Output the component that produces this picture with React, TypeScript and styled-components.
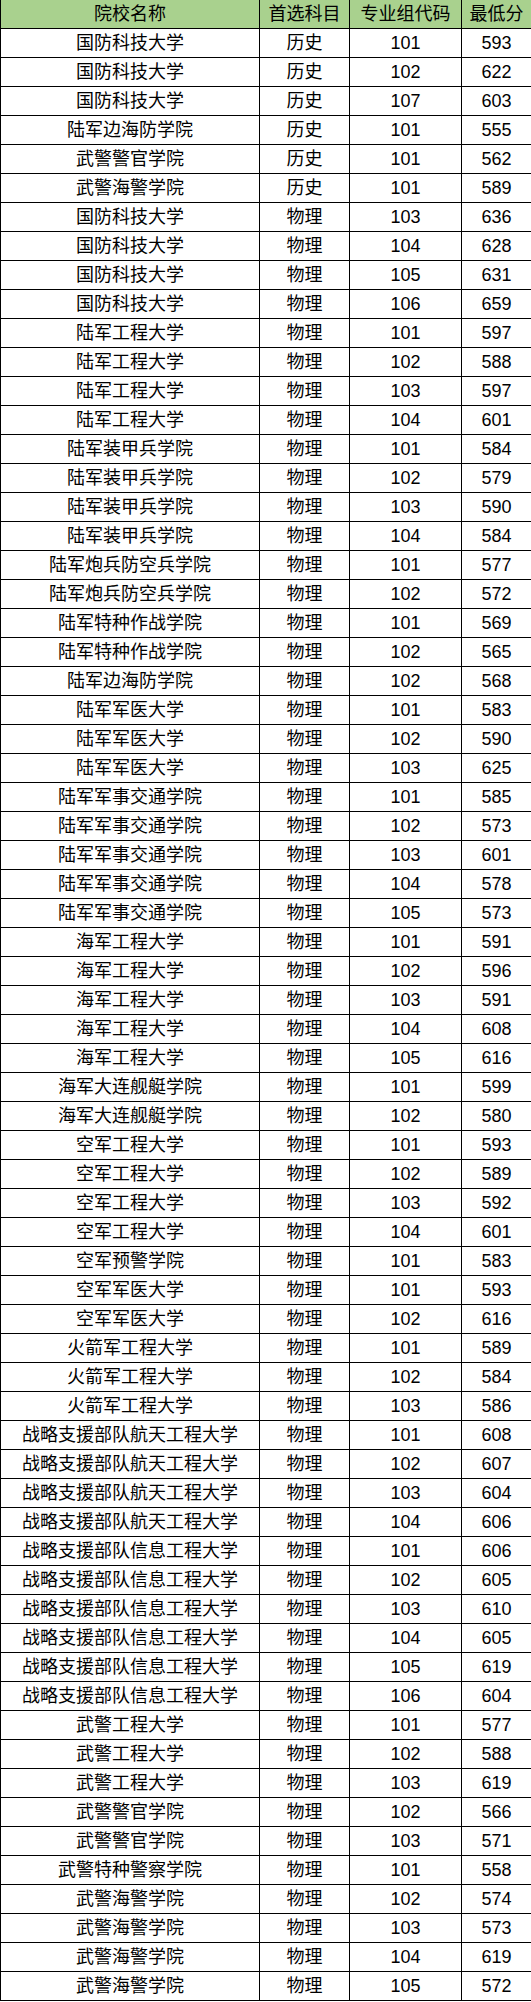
import { FunctionComponent, JSX } from 'react';
import styled, { createGlobalStyle } from 'styled-components';

const GlobalStyle = createGlobalStyle`
  html, body {
    margin: 0;
    padding: 0;
    background: #ffffff;
  }
`;

const Page = styled.div`
  width: 531px;
  font-family: 'Liberation Sans', Arial, 'Noto Sans CJK SC', sans-serif;
  color: #000000;
`;

const Table = styled.table`
  border-collapse: collapse;
  table-layout: fixed;
  width: 531px;
`;

const Col = styled.col<{ $w: number }>`
  width: ${(p) => p.$w}px;
`;

const HeadCell = styled.th`
  height: 28px;
  padding: 0;
  border: 1px solid #000000;
  border-top: none;
  background: #a9d18e;
  font-size: 18px;
  font-weight: normal;
  text-align: center;
  line-height: 28px;
  white-space: nowrap;
`;

const Cell = styled.td`
  height: 28px;
  padding: 0;
  border: 1px solid #000000;
  font-size: 18px;
  text-align: center;
  line-height: 28px;
  white-space: nowrap;
`;

const rows: [string, string, string, string][] = [
  ['国防科技大学', '历史', '101', '593'],
  ['国防科技大学', '历史', '102', '622'],
  ['国防科技大学', '历史', '107', '603'],
  ['陆军边海防学院', '历史', '101', '555'],
  ['武警警官学院', '历史', '101', '562'],
  ['武警海警学院', '历史', '101', '589'],
  ['国防科技大学', '物理', '103', '636'],
  ['国防科技大学', '物理', '104', '628'],
  ['国防科技大学', '物理', '105', '631'],
  ['国防科技大学', '物理', '106', '659'],
  ['陆军工程大学', '物理', '101', '597'],
  ['陆军工程大学', '物理', '102', '588'],
  ['陆军工程大学', '物理', '103', '597'],
  ['陆军工程大学', '物理', '104', '601'],
  ['陆军装甲兵学院', '物理', '101', '584'],
  ['陆军装甲兵学院', '物理', '102', '579'],
  ['陆军装甲兵学院', '物理', '103', '590'],
  ['陆军装甲兵学院', '物理', '104', '584'],
  ['陆军炮兵防空兵学院', '物理', '101', '577'],
  ['陆军炮兵防空兵学院', '物理', '102', '572'],
  ['陆军特种作战学院', '物理', '101', '569'],
  ['陆军特种作战学院', '物理', '102', '565'],
  ['陆军边海防学院', '物理', '102', '568'],
  ['陆军军医大学', '物理', '101', '583'],
  ['陆军军医大学', '物理', '102', '590'],
  ['陆军军医大学', '物理', '103', '625'],
  ['陆军军事交通学院', '物理', '101', '585'],
  ['陆军军事交通学院', '物理', '102', '573'],
  ['陆军军事交通学院', '物理', '103', '601'],
  ['陆军军事交通学院', '物理', '104', '578'],
  ['陆军军事交通学院', '物理', '105', '573'],
  ['海军工程大学', '物理', '101', '591'],
  ['海军工程大学', '物理', '102', '596'],
  ['海军工程大学', '物理', '103', '591'],
  ['海军工程大学', '物理', '104', '608'],
  ['海军工程大学', '物理', '105', '616'],
  ['海军大连舰艇学院', '物理', '101', '599'],
  ['海军大连舰艇学院', '物理', '102', '580'],
  ['空军工程大学', '物理', '101', '593'],
  ['空军工程大学', '物理', '102', '589'],
  ['空军工程大学', '物理', '103', '592'],
  ['空军工程大学', '物理', '104', '601'],
  ['空军预警学院', '物理', '101', '583'],
  ['空军军医大学', '物理', '101', '593'],
  ['空军军医大学', '物理', '102', '616'],
  ['火箭军工程大学', '物理', '101', '589'],
  ['火箭军工程大学', '物理', '102', '584'],
  ['火箭军工程大学', '物理', '103', '586'],
  ['战略支援部队航天工程大学', '物理', '101', '608'],
  ['战略支援部队航天工程大学', '物理', '102', '607'],
  ['战略支援部队航天工程大学', '物理', '103', '604'],
  ['战略支援部队航天工程大学', '物理', '104', '606'],
  ['战略支援部队信息工程大学', '物理', '101', '606'],
  ['战略支援部队信息工程大学', '物理', '102', '605'],
  ['战略支援部队信息工程大学', '物理', '103', '610'],
  ['战略支援部队信息工程大学', '物理', '104', '605'],
  ['战略支援部队信息工程大学', '物理', '105', '619'],
  ['战略支援部队信息工程大学', '物理', '106', '604'],
  ['武警工程大学', '物理', '101', '577'],
  ['武警工程大学', '物理', '102', '588'],
  ['武警工程大学', '物理', '103', '619'],
  ['武警警官学院', '物理', '102', '566'],
  ['武警警官学院', '物理', '103', '571'],
  ['武警特种警察学院', '物理', '101', '558'],
  ['武警海警学院', '物理', '102', '574'],
  ['武警海警学院', '物理', '103', '573'],
  ['武警海警学院', '物理', '104', '619'],
  ['武警海警学院', '物理', '105', '572'],
];

const App: FunctionComponent = (): JSX.Element => {
  return (
    <Page>
      <GlobalStyle />
      <Table>
        <colgroup>
          <Col $w={259} />
          <Col $w={90} />
          <Col $w={112} />
          <Col $w={70} />
        </colgroup>
        <thead>
          <tr>
            <HeadCell>院校名称</HeadCell>
            <HeadCell>首选科目</HeadCell>
            <HeadCell>专业组代码</HeadCell>
            <HeadCell>最低分</HeadCell>
          </tr>
        </thead>
        <tbody>
          {rows.map((r, i) => (
            <tr key={i}>
              {r.map((v, j) => (
                <Cell key={j}>{v}</Cell>
              ))}
            </tr>
          ))}
        </tbody>
      </Table>
    </Page>
  );
};

export default App;
